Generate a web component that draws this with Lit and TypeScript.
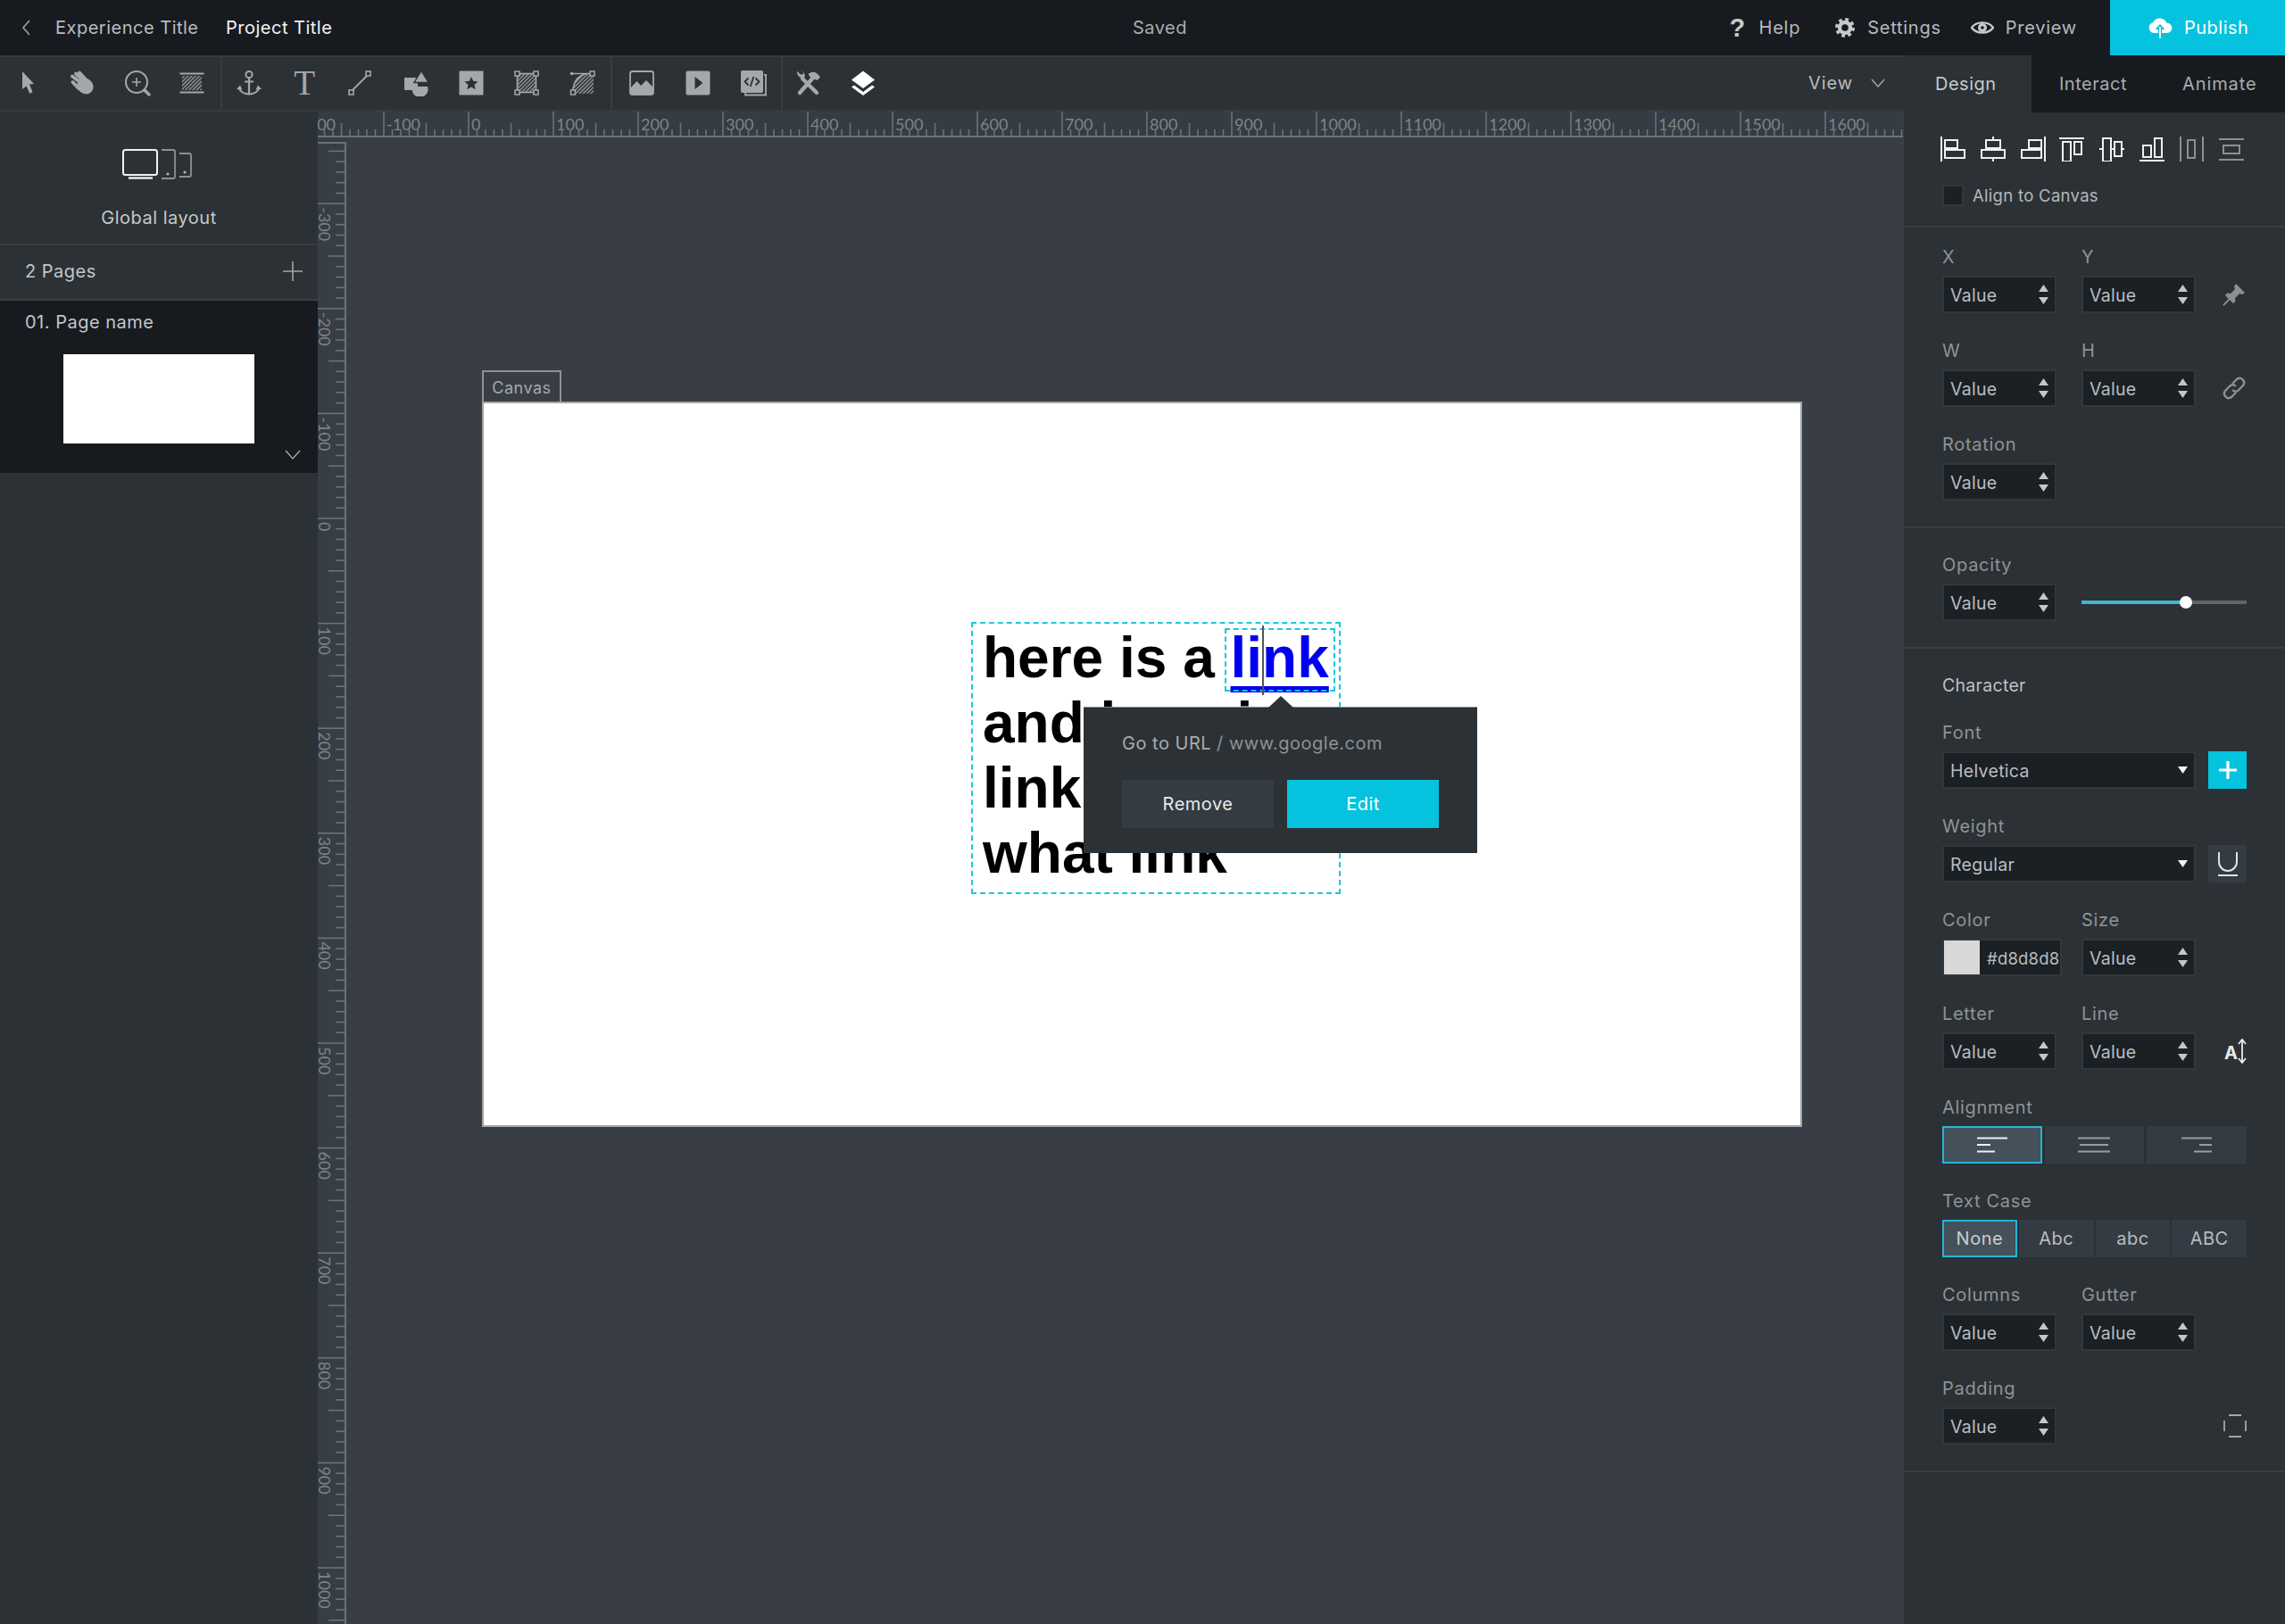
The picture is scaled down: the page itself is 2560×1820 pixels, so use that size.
import { LitElement, html, css, svg } from "lit";
import { customElement } from "lit/decorators.js";

const G = "#a3a8aa";
const D = "#2c3135";

const hatch = (id: string, color = G) => svg`<defs><pattern id=${id} width="3" height="3" patternUnits="userSpaceOnUse" patternTransform="rotate(-45)"><rect width="3" height="1.2" fill=${color}></rect></pattern></defs>`;
const icon = (body: unknown, size = 30) => html`<svg class="ic" width=${size} height=${size} viewBox="0 0 30 30">${body}</svg>`;

const tools = {
  arrow: svg`<path d="M9 2 L22 16 L17 16.5 L20.5 25 L17.5 27 L13.5 18.5 L9 22 Z" fill=${G}></path>`,
  hand: svg`<g stroke=${G} stroke-linecap="round" fill="none" stroke-width="4"><path d="M14 15 L4 7.5"></path><path d="M16 12 L8 4.5"></path><path d="M19 11 L12 3.5"></path><path d="M11 21 L4.5 14"></path></g><ellipse cx="18.5" cy="18.5" rx="9.5" ry="8.5" transform="rotate(40 18.5 18.5)" fill=${G}></ellipse>`,
  zoom: svg`<circle cx="14" cy="14" r="12" fill="none" stroke=${G} stroke-width="2"></circle><path d="M14 9v10M9 14h10" stroke=${G} stroke-width="1.6"></path><path d="M23 23 L28 28" stroke=${G} stroke-width="3.4" stroke-linecap="round"></path>`,
  lines: svg`${hatch("h1")}<rect x="4" y="7" width="22" height="16" fill="url(#h1)"></rect><path d="M1.5 4.5h27M1.5 25.5h27" stroke=${G} stroke-width="2"></path>`,
  anchor: svg`<circle cx="15" cy="5.5" r="3.6" fill="none" stroke=${G} stroke-width="2"></circle><path d="M15 9v19M10 13.5h10" stroke=${G} stroke-width="2.2" fill="none"></path><path d="M3.5 20 C5 25 10 27.5 15 27.5 C20 27.5 25 25 26.5 20" stroke=${G} stroke-width="2.2" fill="none"></path><path d="M1 22 L5 17.5 L7.5 22.5 Z M29 22 L25 17.5 L22.5 22.5 Z" fill=${G}></path>`,
  line: svg`<rect x="3" y="23" width="5" height="5" fill="none" stroke=${G} stroke-width="1.6"></rect><rect x="22" y="2" width="5" height="5" fill="none" stroke=${G} stroke-width="1.6"></rect><path d="M7 23 L23 7" stroke=${G} stroke-width="1.8"></path>`,
  shapes: svg`<rect x="2" y="9" width="15" height="14" fill=${G}></rect><path d="M11 23 V25 A8.500 8.500 0 0 0 28 19 H17 V23 Z" fill=${G}></path><path d="M21 1.500 L29 14.500 H13 Z" fill=${G} stroke=${D} stroke-width="1.4"></path>`,
  star: svg`<rect x="1.5" y="1.5" width="27" height="27" fill=${G}></rect><path d="M15 8 L17.2 12.8 L22.5 13.4 L18.5 17 L19.6 22.2 L15 19.6 L10.4 22.2 L11.5 17 L7.5 13.4 L12.8 12.8 Z" fill=${D}></path>`,
  transform: svg`${hatch("h2")}<rect x="4.5" y="4.5" width="21" height="21" fill="url(#h2)" stroke=${G} stroke-width="1.6"></rect>${[[2,2],[23,2],[2,23],[23,23]].map(([x,y]) => svg`<rect x=${x} y=${y} width="5" height="5" fill=${D} stroke=${G} stroke-width="1.5"></rect>`)}`,
  path: svg`${hatch("h3")}<path d="M5 25 C5 12 12 4.5 25 4.5 L28 4.5 V27 H6 Z" fill="url(#h3)"></path><path d="M4 4.5 H24 M5 25 C5 12 12 4.5 24 4.5" stroke=${G} stroke-width="1.6" fill="none"></path><circle cx="3.5" cy="4.5" r="1.8" fill=${G}></circle><rect x="24" y="2" width="5" height="5" fill=${D} stroke=${G} stroke-width="1.5"></rect><rect x="2.5" y="23" width="5" height="5" fill=${D} stroke=${G} stroke-width="1.5"></rect>`,
  image: svg`<rect x="2" y="2" width="26" height="26" rx="2.5" fill="none" stroke=${G} stroke-width="1.8"></rect><path d="M2 21 L9.5 13 L14 18 L20 12 L28 20 V26 A2 2 0 0 1 26 28 H4 A2 2 0 0 1 2 26 Z" fill=${G}></path>`,
  play: svg`<rect x="1.5" y="1.5" width="27" height="27" rx="2" fill=${G}></rect><path d="M11.5 8 L20.5 15 L11.5 22 Z" fill=${D}></path>`,
  code: svg`<path d="M27 6 H29 V28.5 H6 V26" fill="none" stroke=${G} stroke-width="1.8"></path><rect x="1" y="1" width="25" height="25" rx="2" fill=${G}></rect><path d="M9.5 9.5 L5.5 13.5 L9.5 17.5 M17.5 9.5 L21.5 13.5 L17.5 17.5 M15.3 8 L11.7 19" fill="none" stroke=${D} stroke-width="1.8"></path>`,
  tools: svg`<path d="M6 26 L21 9" stroke=${G} stroke-width="4.4" stroke-linecap="round"></path><path d="M15.5 5 C20 1 25 2 29 8.5 L25.5 12 L22.5 10.5 L19.5 11.5 Z" fill=${G}></path><path d="M9 10 L25 26" stroke=${G} stroke-width="4.4" stroke-linecap="round"></path><path d="M11.5 9 A6.500 6.500 0 0 1 3 1.800 L7 5.500 L10 5 L10 2 L6.500 0.800 A6.500 6.500 0 0 1 11.500 9 Z" fill=${G}></path>`,
  layers: svg`<path d="M15 1.5 L28 11.5 L15 21 L2 11.5 Z" fill="#fff"></path><path d="M5 17.5 L15 25 L25 17.5 L28 19.5 L15 29 L2 19.5 Z" fill="#fff"></path>`,
};

const W = "#eef0f1";
const GY = "#8b9094";
const rect = (x: number, y: number, w: number, h: number, c = W) => svg`<rect x=${x} y=${y} width=${w} height=${h} fill=${D} stroke=${c} stroke-width="2"></rect>`;
const aligns = [
  svg`<path d="M2 0v28" stroke=${W} stroke-width="2"></path>${rect(6, 4, 14, 9)}${rect(6, 15, 22, 9)}`,
  svg`<path d="M15 0v28" stroke=${W} stroke-width="2"></path>${rect(7, 4, 16, 9)}${rect(2, 15, 26, 9)}`,
  svg`<path d="M28 0v28" stroke=${W} stroke-width="2"></path>${rect(10, 4, 14, 9)}${rect(2, 15, 22, 9)}`,
  svg`<path d="M0 2h28" stroke=${W} stroke-width="2"></path>${rect(4, 6, 9, 22)}${rect(17, 6, 8, 14)}`,
  svg`<path d="M0 14h28" stroke=${W} stroke-width="2"></path>${rect(4, 2, 9, 26)}${rect(17, 6, 8, 16)}`,
  svg`<path d="M0 27h28" stroke=${W} stroke-width="2"></path>${rect(4, 10, 9, 13)}${rect(17, 2, 8, 21)}`,
  svg`<path d="M2 0v28M27 0v28" stroke=${GY} stroke-width="2"></path>${rect(10, 4, 8, 20, GY)}`,
  svg`<path d="M0 3h28M0 26h28" stroke=${GY} stroke-width="2"></path>${rect(5, 10, 18, 9, GY)}`,
];

@customElement("app-root")
export class AppRoot extends LitElement {
  static styles = css`
    :host { display: block; width: 2560px; height: 1820px; overflow: hidden; background: #393e46;
      font-family: Inter, "Open Sans", sans-serif; font-size: 20px; letter-spacing: 0.5px; color: #b8bcbf; }
    * { box-sizing: border-box; }
    svg { display: block; flex: none; }
    .top { height: 62px; background: #171b20; display: flex; align-items: center; }
    .back { margin-left: 22px; width: 14px; }
    .exp { margin-left: 26px; width: 191px; color: #b9bcbe; white-space: nowrap; }
    .proj { color: #f2f3f3; width: 1016px; white-space: nowrap; }
    .saved { color: #a9acae; }
    .acts { margin-left: auto; display: flex; align-items: center; height: 100%; }
    .act { display: flex; align-items: center; gap: 13px; color: #b6b9bb; white-space: nowrap; letter-spacing: 0.75px; }
    .qm { font-weight: 700; font-size: 29px; color: #c6c8ca; font-family: "Liberation Sans", sans-serif; width: 16px; text-align: center; margin-right: 4px; }
    .act.help { margin-right: 38px; }
    .act.set { margin-right: 33px; }
    .act.pre { margin-right: 37px; }
    .pub { width: 196px; height: 62px; background: #05c3de; color: #fff; display: flex; align-items: center; padding-left: 42px; gap: 13px; }
    .main { display: flex; height: 1758px; }
    .left { flex: 1; display: flex; flex-direction: column; min-width: 0; }
    .bar { height: 63px; background: #2c3135; border-top: 2px solid #363b40; border-bottom: 2px solid #363b40; display: flex; align-items: stretch; color: #b8bcbf; padding-bottom: 1px; }
    .grp { display: flex; align-items: center; border-right: 2px solid #383d42; }
    .grp.g1 { width: 249px; }
    .grp.g2 { width: 437px; padding-left: 0; }
    .grp.g3 { width: 191px; padding-left: 2px; }
    .grp.g4 { border: 0; flex: 1; margin-left: -3px; }
    .tool { width: 62px; display: flex; justify-content: center; align-items: center; flex: none; }
    .grp.g1 .tool { width: 61.5px; }
    .grp.g2 .tool { width: 62.2px; }
    .grp.g2 .tool:first-child { margin-left: -1px; }
    .grp.g3 .tool { width: 62.5px; }
    .t-t { font-family: "Liberation Serif", serif; font-size: 39px; line-height: 30px; color: #a3a8aa; letter-spacing: 0; }
    .view { margin-left: auto; display: flex; align-items: center; gap: 20px; padding-right: 21px; color: #b9bcbe; letter-spacing: 0.9px; }
    .work { flex: 1; display: flex; min-height: 0; }
    .side { width: 356px; background: #2c3135; flex: none; }
    .glob { height: 150px; display: flex; flex-direction: column; align-items: center; border-bottom: 2px solid #383d42; padding-top: 42px; }
    .glob svg { margin-right: 3px; }
    .glob span { margin-top: 31px; color: #c5c8ca; }
    .pages { height: 62px; display: flex; justify-content: space-between; align-items: center; padding: 0 17px 2px 28px; border-bottom: 2px solid #383d42; color: #c3c6c8; }
    .pg { height: 193px; background: #171b20; padding: 12px 0 0 28px; color: #c3c6c8; }
    .pg .thumb { width: 214px; height: 100px; background: #fff; margin: 24px 0 0 43px; }
    .pg .chev { display: flex; justify-content: flex-end; padding: 7px 19px 0 0; }
    .stage { flex: 1; display: flex; flex-direction: column; background: #393e46; min-width: 0; }
    .hr { height: 29px; flex: none; display: block; }
    .below { flex: 1; display: flex; padding-top: 5px; min-height: 0; }
    .vr { flex: none; display: block; }
    .area { flex: 1; padding: 256px 0 0 152px; }
    .tab { width: 89px; height: 35px; border: 2px solid #8f9295; border-bottom: 0; padding-top: 2px; display: flex; align-items: center; justify-content: center; color: #a5a8aa; font-size: 18px; }
    .board { width: 1479px; height: 813px; background: #fff; border: 2px solid #a6a6a6; position: relative; }
    .tbox { position: absolute; left: 546px; top: 245px; width: 414px; height: 305px; border: 2px dashed #18c8de; padding: 2px 0 0 11px;
      font: 700 64px/73px "Liberation Sans", sans-serif; color: #000; white-space: nowrap; letter-spacing: 0; }
    .tbox a { color: #0000f0; text-decoration: underline; text-decoration-thickness: 7px; text-underline-offset: 10px; text-decoration-skip-ink: none; }
    .lbox { position: absolute; left: 282px; top: 5px; width: 124px; height: 71px; border: 2px dashed #18c8de; }
    .caret { position: absolute; left: 324px; top: 2px; width: 2px; height: 78px; background: #555; }
    .pop { position: absolute; left: 672px; top: 340px; width: 441px; height: 164px; background: #2c3135; padding: 28px 43px 0; border-top: 1px solid #868a8d; }
    .pop::before { content: ""; position: absolute; left: 207px; top: -13px; width: 28px; height: 13px; background: #2c3135; clip-path: polygon(50% 0, 100% 100%, 0 100%); }
    .url { height: 24px; display: flex; align-items: center; color: #a9acae; gap: 6px; white-space: nowrap; }
    .url i { font-style: normal; color: #8d9194; }
    .btns { display: flex; gap: 15px; margin-top: 29px; }
    .btn { width: 170px; height: 54px; display: flex; align-items: center; justify-content: center; color: #e8eaeb; background: #353b42; }
    .btn.pri { background: #05c3de; color: #fff; }
    .panel { width: 427px; flex: none; background: #2c3135; }
    .tabs { height: 64px; display: flex; background: #171b20; align-items: center; }
    .tabs span { white-space: nowrap; color: #a9acae; }
    .tabs .on { width: 143px; height: 100%; background: #2c3135; color: #c6c9cb; display: flex; align-items: center; padding-left: 35px; }
    .tabs .i { margin-left: 31px; width: 138px; }
    .tabs .a { letter-spacing: 0.9px; }
    .sec { border-bottom: 2px solid #383d42; padding: 27px 43px 22px; }
    .als { display: flex; margin-left: -10px; height: 28px; }
    .als div { width: 44.7px; flex: none; display: flex; justify-content: center; }
    .chk { margin-top: 26px; display: flex; align-items: center; height: 24px; gap: 10px; font-size: 18.5px; letter-spacing: 0.3px; color: #b4b7b9; white-space: nowrap; }
    .chk b { width: 24px; height: 24px; background: #1b2025; border: 2px solid #32373c; }
    .s2 { padding-top: 21px; padding-bottom: 29px; }
    .s3 { padding-top: 29px; padding-bottom: 29px; }
    .row { display: flex; margin-bottom: 30px; }
    .row:last-child { margin-bottom: 0; }
    .f { width: 128px; flex: none; }
    .f + .f { margin-left: 28px; }
    .f.wide { width: 284px; }
    .f.full { width: 341px; }
    .f.col { width: 134px; }
    .f.col + .f { margin-left: 22px; }
    label { display: block; height: 24px; line-height: 24px; margin-bottom: 9px; font-size: 20px; letter-spacing: 0.7px; color: #8f9397; white-space: nowrap; }
    .head { height: 24px; line-height: 24px; margin-bottom: 29px; color: #bdc0c2; font-size: 19.5px; letter-spacing: 0.3px; }
    .inp { height: 42px; background: #1b2025; border: 2px solid #32373c; display: flex; align-items: center; justify-content: space-between; padding: 0 7px 0 7px; color: #b9bdc0; font-size: 19.5px; letter-spacing: 0.3px; white-space: nowrap; }
    .inp > span:first-child { margin-top: 2px; }
    .spin { display: flex; flex-direction: column; gap: 6px; }
    .spin i { display: block; width: 11px; height: 8px; background: #c4c7ca; }
    .spin i:first-child { clip-path: polygon(50% 0, 100% 100%, 0 100%); }
    .spin i:last-child { clip-path: polygon(0 0, 100% 0, 50% 100%); }
    .drop { width: 11px; height: 8px; background: #f2f3f3; clip-path: polygon(0 0, 100% 0, 50% 100%); }
    .sideb { margin-left: 14px; width: 43px; height: 42px; align-self: flex-end; flex: none; display: flex; align-items: center; justify-content: center; }
    .sideb.add { background: #05c3de; }
    .sideb.u { background: #353b42; }
    .sidei { margin-left: 14px; width: 43px; height: 42px; align-self: flex-end; flex: none; display: flex; align-items: center; justify-content: flex-end; }
    .a-txt { font: 700 20px/20px Inter, sans-serif; color: #e8eaeb; letter-spacing: 0; margin-top: 4px; }
    .sw { padding: 0; justify-content: flex-start; }
    .sw b { width: 40px; height: 38px; background: #d8d8d8; flex: none; }
    .sw span { margin-left: 8px; margin-top: 1px; font-size: 18.5px; letter-spacing: 0.2px; }
    .slider { margin-left: 28px; width: 185px; height: 42px; align-self: flex-end; display: flex; align-items: center; }
    .track { height: 4px; width: 100%; background: #5e6469; position: relative; }
    .fill { height: 4px; background: #3fb6d3; }
    .knob { position: absolute; width: 14px; height: 14px; border-radius: 50%; background: #fff; top: -5px; margin-left: -7px; }
    .segs { display: grid; gap: 3px; height: 42px; }
    .segs.three { grid-template-columns: repeat(3, 1fr); }
    .segs.four { grid-template-columns: repeat(4, 1fr); gap: 2px; }
    .seg { background: #353b42; display: flex; align-items: center; justify-content: center; color: #b9bdc0; }
    .seg.on { background: #44505a; border: 2px solid #22b6d6; color: #c9ced1; }
  `;

  private hRuler() {
    const w = 1776, h = 29, o = 169, s = 95;
    const ticks = [], labels = [];
    for (let i = -30; i <= 180; i++) {
      const x = o + i * s / 10;
      const len = i % 10 === 0 ? 27 : (i % 5 === 0 ? 14 : 7);
      ticks.push(svg`<path d="M${x} ${27 - len}v${len}" stroke="#6c7277" stroke-width="1.6"></path>`);
      if (i % 10 === 0) labels.push(svg`<text x=${x + 3} y="21" font-family="Lato, sans-serif" font-size="18" letter-spacing="0" fill="#7e8488">${i * 10}</text>`);
    }
    return html`<svg class="hr" width=${w} height=${h}><rect width=${w} height=${h} fill="#353c44"></rect>${labels}${ticks}<rect y="27" width=${w} height="2" fill="#6c7277"></rect></svg>`;
  }

  private vRuler() {
    const w = 32, h = 1661, o = 422, s = 117.6;
    const ticks = [], labels = [];
    for (let i = -40; i <= 130; i++) {
      const y = o + i * s / 10;
      if (y < 0) continue;
      const len = i % 10 === 0 ? 30 : (i % 5 === 0 ? 18 : 10);
      ticks.push(svg`<path d="M${30 - len} ${y}h${len}" stroke="#6c7277" stroke-width="1.6"></path>`);
      if (i % 10 === 0) labels.push(svg`<text transform="translate(1 ${y + 4}) rotate(90)" font-family="Lato, sans-serif" font-size="18" letter-spacing="0" fill="#7e8488">${i * 10}</text>`);
    }
    return html`<svg class="vr" width=${w} height=${h}><rect width=${w} height=${h} fill="#383e46"></rect><rect width=${w} height="2" fill="#6c7277"></rect><rect x="30" width="2" height=${h} fill="#6c7277"></rect>${labels}${ticks}</svg>`;
  }

  private spin() { return html`<span class="spin"><i></i><i></i></span>`; }
  private field(name: string) {
    return html`<div class="f"><label>${name}</label><div class="inp"><span>Value</span>${this.spin()}</div></div>`;
  }
  private select(name: string, value: string) {
    return html`<div class="f wide"><label>${name}</label><div class="inp"><span>${value}</span><span class="drop"></span></div></div>`;
  }

  render() {
    const opacity = 63.5;
    return html`
      <div class="top">
        <svg class="back" width="14" height="20" viewBox="0 0 14 20"><path d="M11 2 L4 10 L11 18" fill="none" stroke="#a4a7a9" stroke-width="1.5"></path></svg>
        <span class="exp">Experience Title</span>
        <span class="proj">Project Title</span>
        <span class="saved">Saved</span>
        <div class="acts">
          <div class="act help"><span class="qm">?</span><span>Help</span></div>
          <div class="act set">
            <svg width="24" height="24" viewBox="0 0 24 24"><circle cx="12" cy="12" r="9" fill="none" stroke="#c6c8ca" stroke-width="4" stroke-dasharray="3.6 3.47"></circle><circle cx="12" cy="12" r="6" fill="none" stroke="#c6c8ca" stroke-width="4.4"></circle></svg>
            <span>Settings</span>
          </div>
          <div class="act pre">
            <svg width="26" height="18" viewBox="0 0 26 18"><path d="M1 9 C6 1.5 20 1.5 25 9 C20 16.5 6 16.5 1 9 Z" fill="none" stroke="#c6c8ca" stroke-width="2.4"></path><circle cx="13" cy="9" r="5" fill="#c6c8ca"></circle><circle cx="13" cy="9" r="1.8" fill="#171b20"></circle></svg>
            <span>Preview</span>
          </div>
          <div class="pub">
            <svg width="28" height="24" viewBox="0 0 28 24"><path d="M7 18 A6 6 0 0 1 6 6.3 A8.5 8.5 0 0 1 21.5 6.8 A5.6 5.6 0 0 1 22 18 Z" fill="#fff"></path><path d="M14 8 L8.5 14 H19.5 Z" fill="#05c3de"></path><path d="M14 12 V24" stroke="#05c3de" stroke-width="4"></path><path d="M14 11 V24" stroke="#fff" stroke-width="1.8"></path></svg>
            <span>Publish</span>
          </div>
        </div>
      </div>
      <div class="main">
        <div class="left">
          <div class="bar">
            <div class="grp g1">
              <div class="tool">${icon(tools.arrow)}</div><div class="tool">${icon(tools.hand)}</div><div class="tool">${icon(tools.zoom)}</div><div class="tool">${icon(tools.lines)}</div>
            </div>
            <div class="grp g2">
              <div class="tool">${icon(tools.anchor)}</div><div class="tool"><span class="t-t">T</span></div><div class="tool">${icon(tools.line)}</div><div class="tool">${icon(tools.shapes)}</div><div class="tool">${icon(tools.star)}</div><div class="tool">${icon(tools.transform)}</div><div class="tool">${icon(tools.path)}</div>
            </div>
            <div class="grp g3">
              <div class="tool">${icon(tools.image)}</div><div class="tool">${icon(tools.play)}</div><div class="tool">${icon(tools.code)}</div>
            </div>
            <div class="grp g4">
              <div class="tool">${icon(tools.tools)}</div><div class="tool">${icon(tools.layers)}</div>
              <div class="view"><span>View</span><svg width="16" height="10" viewBox="0 0 16 10"><path d="M1 1 L8 9 L15 1" fill="none" stroke="#a4a7a9" stroke-width="1.4"></path></svg></div>
            </div>
          </div>
          <div class="work">
            <div class="side">
              <div class="glob">
                <svg width="80" height="34" viewBox="0 0 80 34">
                  <rect x="1" y="1" width="38" height="28" rx="2.5" fill="none" stroke="#f0f1f2" stroke-width="2"></rect>
                  <path d="M7 32.5h27" stroke="#f0f1f2" stroke-width="2.4"></path>
                  <path d="M44 1 H57 A2 2 0 0 1 59 3 V31 A2 2 0 0 1 57 33 H44 M64 5 H75 A2 2 0 0 1 77 7 V29 A2 2 0 0 1 75 31 H64" fill="none" stroke="#8d9194" stroke-width="1.8"></path>
                  <circle cx="51" cy="28" r="1.6" fill="#b4b7b9"></circle><circle cx="70" cy="26" r="1.6" fill="#b4b7b9"></circle>
                </svg>
                <span>Global layout</span>
              </div>
              <div class="pages"><span>2 Pages</span><svg width="22" height="22" viewBox="0 0 22 22"><path d="M11 0v22M0 11h22" stroke="#a4a7a9" stroke-width="1.6"></path></svg></div>
              <div class="pg">
                <span>01. Page name</span>
                <div class="thumb"></div>
                <div class="chev"><svg width="18" height="12" viewBox="0 0 18 12"><path d="M1 1 L9 10 L17 1" fill="none" stroke="#a4a7a9" stroke-width="1.4"></path></svg></div>
              </div>
            </div>
            <div class="stage">
              ${this.hRuler()}
              <div class="below">
                ${this.vRuler()}
                <div class="area">
                  <div class="tab">Canvas</div>
                  <div class="board">
                    <div class="tbox">
                      here is a <a>link</a><br>and here is<br>link<br>what link
                      <div class="lbox"></div>
                      <div class="caret"></div>
                    </div>
                    <div class="pop">
                      <div class="url"><span>Go to URL</span><i>/ www.google.com</i></div>
                      <div class="btns"><div class="btn">Remove</div><div class="btn pri">Edit</div></div>
                    </div>
                  </div>
                </div>
              </div>
            </div>
          </div>
        </div>
        <div class="panel">
          <div class="tabs"><span class="on">Design</span><span class="i">Interact</span><span class="a">Animate</span></div>
          <div class="sec">
            <div class="als">${aligns.map(a => html`<div><svg width="30" height="28" viewBox="0 0 30 28">${a}</svg></div>`)}</div>
            <div class="chk"><b></b><span>Align to Canvas</span></div>
          </div>
          <div class="sec s2">
            <div class="row">${this.field("X")}${this.field("Y")}
              <div class="sidei"><svg width="28" height="28" viewBox="0 0 28 28"><path d="M2 26 L10 18" stroke="#8b9094" stroke-width="1.8"></path><path d="M16 2 L26 12 L23 14 L20 13 L15 18 L15.5 22 L13 24 L4 15 L6 12.5 L10 13 L15 8 L14 5 Z" fill="#8b9094"></path></svg></div>
            </div>
            <div class="row">${this.field("W")}${this.field("H")}
              <div class="sidei"><svg width="28" height="28" viewBox="0 0 28 28"><g fill="none" stroke="#8b9094" stroke-width="2.4"><path d="M12 9 L17 4 A5 5 0 0 1 24 11 L18 17 A5 5 0 0 1 12 16"></path><path d="M16 19 L11 24 A5 5 0 0 1 4 17 L10 11 A5 5 0 0 1 16 12"></path></g></svg></div>
            </div>
            <div class="row">${this.field("Rotation")}</div>
          </div>
          <div class="sec s3">
            <div class="row">${this.field("Opacity")}
              <div class="slider"><div class="track"><div class="fill" style="width:${opacity}%"></div><div class="knob" style="left:${opacity}%"></div></div></div>
            </div>
          </div>
          <div class="sec s3">
            <div class="head">Character</div>
            <div class="row">${this.select("Font", "Helvetica")}
              <div class="sideb add"><svg width="24" height="24" viewBox="0 0 24 24"><path d="M12 2v20M2 12h20" stroke="#fff" stroke-width="3.2"></path></svg></div>
            </div>
            <div class="row">${this.select("Weight", "Regular")}
              <div class="sideb u"><svg width="24" height="30" viewBox="0 0 24 30"><path d="M2 2 V13 A10 10 0 0 0 22 13 V2" fill="none" stroke="#e2e4e5" stroke-width="2"></path><path d="M1 28h22" stroke="#e2e4e5" stroke-width="2"></path></svg></div>
            </div>
            <div class="row">
              <div class="f col"><label>Color</label><div class="inp sw"><b></b><span>#d8d8d8</span></div></div>
              ${this.field("Size")}
            </div>
            <div class="row">${this.field("Letter")}${this.field("Line")}
              <div class="sidei"><span class="a-txt">A</span><svg width="10" height="28" viewBox="0 0 10 28"><path d="M5 2v24M1 6 L5 1 L9 6 M1 22 L5 27 L9 22" fill="none" stroke="#e8eaeb" stroke-width="1.8"></path></svg></div>
            </div>
            <div class="row"><div class="f full"><label>Alignment</label>
              <div class="segs three">
                <div class="seg on"><svg width="34" height="18" viewBox="0 0 34 18"><path d="M0 1.500h34M0 9h15M0 16.500h20" stroke="#eef0f1" stroke-width="2"></path></svg></div>
                <div class="seg"><svg width="36" height="18" viewBox="0 0 36 18"><path d="M0 1.500h36M2 9h32M0 16.500h36" stroke="#9a9ea1" stroke-width="2"></path></svg></div>
                <div class="seg"><svg width="34" height="18" viewBox="0 0 34 18"><path d="M0 1.500h34M20 9h14M14 16.500h20" stroke="#9a9ea1" stroke-width="2"></path></svg></div>
              </div></div></div>
            <div class="row"><div class="f full"><label>Text Case</label>
              <div class="segs four"><div class="seg on">None</div><div class="seg">Abc</div><div class="seg">abc</div><div class="seg">ABC</div></div>
            </div></div>
            <div class="row">${this.field("Columns")}${this.field("Gutter")}</div>
            <div class="row">${this.field("Padding")}<div class="f"></div>
              <div class="sidei"><svg width="26" height="26" viewBox="0 0 26 26"><path d="M6 1h14M6 25h14M1 7v12M25 7v12" stroke="#a4a7a9" stroke-width="1.8"></path></svg></div>
            </div>
          </div>
        </div>
      </div>
    `;
  }
}
